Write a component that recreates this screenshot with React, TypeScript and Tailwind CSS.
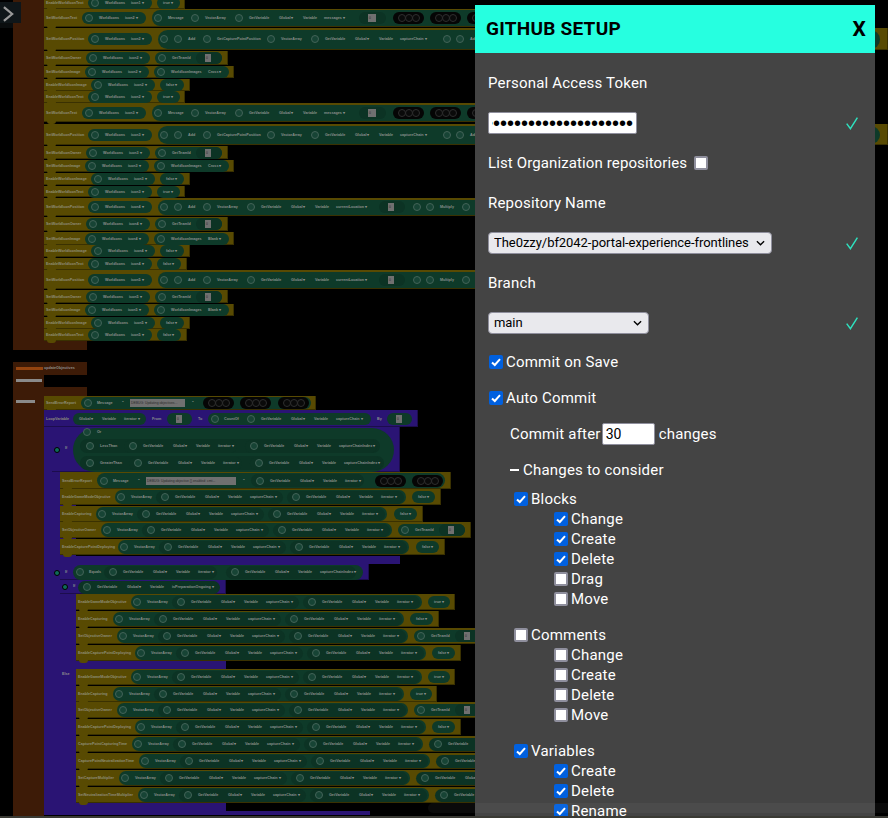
import { useState } from 'react'

type Part =
  | { k: 'pill'; x: number; w: number; dy?: number; h?: number; dark?: boolean; black?: boolean }
  | { k: 'text'; x: number; t: string; dy?: number }
  | { k: 'dot'; x: number; dy?: number; dim?: boolean }
  | { k: 'field'; x: number; w: number; t?: string; dy?: number }

type Row = { y: number; h: number; x: number; r: number; label?: string; color?: string; parts: Part[]; notch?: boolean }

const YELLOW = '#584a02'
const PURPLE = '#2a1474'
const BROWN = '#3d1b07'

const pill = (x: number, w: number, extra: Partial<Part> = {}) => ({ k: 'pill', x, w, ...extra }) as Part
const text = (x: number, t: string, dy = 0): Part => ({ k: 'text', x, t, dy })
const dot = (x: number, dy = 0): Part => ({ k: 'dot', x, dy })
const field = (x: number, w: number, t?: string, dy = 0): Part => ({ k: 'field', x, w, t, dy })

const iconPill = (x: number, n: string, name = 'WorldIcons') => [
  pill(x, 64),
  dot(x + 3),
  text(x + 17, name),
  text(x + 43, `icon${n} ▾`),
]

const boolPill = (x: number, w: number, t: string) => [pill(x, w), text(x + 6, `${t} ▾`)]

const getVar = (x: number, name: string, w: number, dark = true, dy = 0): Part[] => [
  ...(dark ? [pill(x, w, { dark: true, dy, h: 13 })] : []),
  dot(x + 5, dy),
  text(x + 19, 'GetVariable', dy),
  text(x + 49, 'Global ▾', dy),
  text(x + 72, 'Variable', dy),
  text(x + 94, `${name} ▾`, dy),
]

const teamPill = (x: number) => [
  pill(x, 67),
  dot(x + 3),
  text(x + 17, 'GetTeamId'),
  pill(x + 41, 26, { dark: true }),
  field(x + 50, 6),
]

const blackPills = (xs: number[]) =>
  xs.flatMap((x): Part[] => [
    pill(x, 31, { black: true }),
    { k: 'dot', x: x + 5, dim: true },
    { k: 'dot', x: x + 12, dim: true },
    { k: 'dot', x: x + 19, dim: true },
  ])

const messageRow = (y: number, h: number, n: string): Row => ({
  y,
  h,
  x: 44,
  r: 868,
  label: 'SetWorldIconText',
  parts: [
    ...iconPill(82, n),
    pill(152, 710, { h: 16 }),
    dot(154),
    text(168, 'Message'),
    dot(191),
    text(205, 'VectorArray'),
    dot(235),
    text(249, 'GetVariable'),
    text(279, 'Global ▾'),
    text(303, 'Variable'),
    text(324, 'messages ▾'),
    pill(359, 27, { dark: true }),
    field(368, 8),
    ...blackPills([393, 430, 467]),
  ],
})

const positionRow = (y: number, h: number, n: string, kind: 'capture' | 'location'): Row => ({
  y,
  h,
  x: 44,
  r: kind === 'capture' ? 888 : 868,
  label: 'SetWorldIconPosition',
  parts: [
    ...iconPill(88, n),
    pill(158, kind === 'capture' ? 722 : 704, { h: h - 3 }),
    dot(160),
    dot(174),
    text(188, 'Add'),
    ...(kind === 'capture'
      ? [
          dot(203),
          text(217, 'GetCapturePointPosition'),
          dot(267),
          text(281, 'VectorArray'),
          dot(311),
          text(325, 'GetVariable'),
          text(355, 'Global ▾'),
          text(379, 'Variable'),
          text(400, 'captureChain ▾'),
          dot(443),
          dot(456),
          text(470, 'Add'),
        ]
      : [
          dot(203),
          text(217, 'VectorArray'),
          dot(247),
          text(261, 'GetVariable'),
          text(291, 'Global ▾'),
          text(315, 'Variable'),
          text(336, 'currentLocation ▾'),
          pill(379, 26, { dark: true }),
          field(388, 6),
          dot(413),
          dot(426),
          text(440, 'Multiply'),
          dot(462),
        ]),
  ],
})

const ownerRow = (y: number, h: number, n: string): Row => ({
  y,
  h,
  x: 44,
  r: 228,
  label: 'SetWorldIconOwner',
  parts: [...iconPill(86, n), ...teamPill(155)],
})

const imageRow = (y: number, h: number, n: string, img: string): Row => ({
  y,
  h,
  x: 44,
  r: 234,
  label: 'SetWorldIconImage',
  parts: [...iconPill(85, n), pill(154, 75), dot(157), text(171, 'WorldIconImages'), text(208, `${img} ▾`)],
})

const enableImage = (y: number, h: number, n: string): Row => ({
  y,
  h,
  x: 44,
  r: 190,
  label: 'EnableWorldIconImage',
  parts: [...iconPill(91, n), ...boolPill(160, 24, 'false')],
})

const enableText = (y: number, h: number, n: string, v: string): Row => ({
  y,
  h,
  x: 44,
  r: v === 'true' ? 185 : 187,
  label: 'EnableWorldIconText',
  parts: [...iconPill(88, n), ...boolPill(157, v === 'true' ? 23 : 24, v)],
})

const arrayRow = (y: number, x: number, r: number, label: string, s: number, end: Part[]): Row => ({
  y,
  h: 16,
  x,
  r,
  label,
  parts: [
    pill(s, 291, { h: 14 }),
    dot(s + 2),
    text(s + 16, 'VectorArray'),
    ...getVar(s + 41, 'captureChain', 127),
    ...getVar(s + 172, 'iterator', 117),
    ...end,
  ],
})

const rows: Row[] = [
  { ...enableText(-3, 12, '1', 'true') },
  messageRow(9, 18, '2'),
  positionRow(28, 22, '2', 'capture'),
  ownerRow(51, 14, '2'),
  imageRow(66, 12, '2', 'Cross'),
  enableImage(79, 12, '2'),
  enableText(91, 12, '2', 'true'),
  messageRow(103, 19, '3'),
  positionRow(124, 21, '3', 'capture'),
  ownerRow(146, 13, '3'),
  imageRow(160, 12, '3', 'Cross'),
  enableImage(173, 12, '3'),
  enableText(186, 11, '3', 'true'),
  positionRow(198, 18, '4', 'location'),
  ownerRow(217, 14, '4'),
  imageRow(232, 13, '4', 'Blank'),
  enableImage(245, 12, '4'),
  enableText(258, 12, '4', 'false'),
  positionRow(270, 19, '5', 'location'),
  ownerRow(290, 13, '5'),
  imageRow(304, 12, '5', 'Blank'),
  enableImage(317, 12, '5'),
  enableText(329, 12, '5', 'false'),
  {
    y: 396,
    h: 14,
    x: 44,
    r: 316,
    label: 'SendErrorReport',
    parts: [
      pill(81, 230),
      dot(84),
      text(97, 'Message'),
      text(122, '"'),
      field(130, 55, 'DEBUG: Updating objectives...'),
      text(192, '"'),
      ...blackPills([203, 240, 278]),
    ],
  },
  {
    y: 410,
    h: 17,
    x: 44,
    r: 418,
    label: 'LoopVariable',
    color: PURPLE,
    notch: false,
    parts: [
      pill(73, 73),
      text(79, 'Global ▾'),
      text(102, 'Variable'),
      text(124, 'iterator ▾'),
      text(152, 'From'),
      pill(167, 25),
      field(176, 6),
      text(198, 'To'),
      pill(208, 163),
      dot(211),
      text(224, 'CountOf'),
      ...getVar(242, 'captureChain', 120, false),
      text(377, 'By'),
      pill(387, 25),
      field(396, 6),
    ],
  },
  {
    y: 427,
    h: 45,
    x: 52,
    r: 400,
    color: PURPLE,
    notch: false,
    parts: [
      pill(73, 321, { h: 44 }),
      dot(83, -17.5),
      text(97, 'Or', -18),
      pill(80, 300, { dark: true, dy: -3.5, h: 14 }),
      dot(86, -3.5),
      text(100, 'LessThan', -3.5),
      ...getVar(124, 'iterator', 113, true, -3.5),
      ...getVar(245, 'captureChainIndex', 132, true, -3.5),
      pill(80, 304, { dark: true, dy: 13.5, h: 14 }),
      dot(86, 13.5),
      text(100, 'GreaterThan', 13.5),
      ...getVar(129, 'iterator', 113, true, 13.5),
      ...getVar(250, 'captureChainIndex', 132, true, 13.5),
    ],
  },
  {
    y: 472,
    h: 17,
    x: 60,
    r: 451,
    label: 'SendErrorReport',
    parts: [
      pill(97, 348, { h: 15 }),
      dot(100),
      text(113, 'Message'),
      text(138, '"'),
      field(146, 90, 'DEBUG: Updating objective {} enabled: cmt...'),
      text(243, '"'),
      ...getVar(251, 'iterator', 113),
      ...blackPills([375, 412]),
    ],
  },
  arrayRow(489, 60, 441, 'EnableGameModeObjective', 115, boolPill(412, 23, 'false')),
  arrayRow(506, 60, 423, 'EnableCapturing', 96, boolPill(394, 23, 'false')),
  arrayRow(522, 60, 471, 'SetObjectiveOwner', 101, teamPill(398)),
  arrayRow(539, 60, 445, 'EnableCapturePointDeploying', 118, boolPill(416, 23, 'false')),
  {
    y: 564,
    h: 16,
    x: 60,
    r: 369,
    color: PURPLE,
    notch: false,
    parts: [
      pill(73, 290, { h: 15 }),
      dot(76),
      text(89, 'Equals'),
      ...getVar(104, 'iterator', 113),
      ...getVar(226, 'captureChainIndex', 130),
    ],
  },
  {
    y: 580,
    h: 14,
    x: 60,
    r: 226,
    color: PURPLE,
    notch: false,
    parts: [...getVar(78, 'isPreparationOngoing', 142)],
  },
  arrayRow(594, 76, 455, 'EnableGameModeObjective', 131, boolPill(428, 22, 'true')),
  arrayRow(611, 76, 439, 'EnableCapturing', 113, boolPill(410, 23, 'false')),
  arrayRow(628, 76, 480, 'SetObjectiveOwner', 117, teamPill(414)),
  arrayRow(645, 76, 461, 'EnableCapturePointDeploying', 135, boolPill(432, 23, 'false')),
  arrayRow(669, 76, 455, 'EnableGameModeObjective', 131, boolPill(428, 22, 'true')),
  arrayRow(686, 76, 437, 'EnableCapturing', 113, boolPill(410, 22, 'true')),
  arrayRow(702, 76, 480, 'SetObjectiveOwner', 117, teamPill(414)),
  arrayRow(719, 76, 461, 'EnableCapturePointDeploying', 135, boolPill(432, 23, 'false')),
  arrayRow(736, 76, 480, 'CapturePointCapturingTime', 132, getVar(429, 'iterator', 100)),
  arrayRow(753, 76, 480, 'CapturePointNeutralizationTime', 139, getVar(436, 'iterator', 100)),
  arrayRow(770, 76, 480, 'SetCaptureMultiplier', 119, getVar(416, 'iterator', 100)),
  arrayRow(787, 76, 480, 'SetNeutralizationTimeMultiplier', 138, getVar(435, 'iterator', 100)),
]

const rects: [number, number, number, number, string][] = [
  [13, -2, 31, 352, BROWN],
  [44, 341, 43, 9, BROWN],
  [13, 362, 74, 13, BROWN],
  [13, 375, 31, 441, BROWN],
  [44, 387, 43, 9, BROWN],
  [44, 410, 32, 405, PURPLE],
  [60, 556, 340, 8, PURPLE],
  [76, 660, 150, 9, PURPLE],
  [76, 802, 150, 9, PURPLE],
  [44, 811, 326, 4, PURPLE],
]

// markers and captions that sit on the canvas outside of a block row
const captions: [number, number, string][] = [
  [44, 368, 'updateObjectives'],
  [65, 448, 'If'],
  [65, 572, 'If'],
  [73, 586, 'If'],
  [62, 674, 'Else'],
]
const markers: [number, number][] = [
  [54, 447],
  [54, 570],
  [62, 584],
]
const bars: [number, number, number, string][] = [
  [16, 367, 27, '#94440f'],
  [16, 379, 26, '#8a8a8a'],
  [16, 400, 19, '#8a8a8a'],
]

const tinyText = 'absolute text-[3.7px] leading-[6px] font-bold whitespace-nowrap'

function CanvasPart({ part, mid }: { part: Part; mid: number }) {
  const top = mid + (part.dy ?? 0)
  if (part.k === 'pill') {
    const h = part.h ?? 12
    return (
      <div
        className={`absolute rounded-full ${part.black ? 'bg-[#050505]' : part.dark ? 'bg-[#0c3324]' : 'bg-[#0e3a29]'}`}
        style={{ left: part.x, top: top - h / 2, width: part.w, height: h }}
      />
    )
  }
  if (part.k === 'dot') {
    return (
      <div
        className={`absolute w-[8px] h-[8px] rounded-full border ${part.dim ? 'border-[#2e2e2e] bg-[#0a0a0a]' : 'border-[#436358] bg-[#174435]'}`}
        style={{ left: part.x, top: top - 4 }}
      />
    )
  }
  if (part.k === 'field') {
    return (
      <div
        className="absolute h-[8px] bg-[#707070] overflow-hidden text-[3.4px] leading-[8px] pl-[1px] whitespace-nowrap text-[#2c2c2c]"
        style={{ left: part.x, top: top - 4, width: part.w }}
      >
        {part.t ?? '0'}
      </div>
    )
  }
  return (
    <div className={`${tinyText} text-[#8b8f8c]`} style={{ left: part.x, top: top - 3 }}>
      {part.t}
    </div>
  )
}

function BlockCanvas() {
  return (
    <div className="absolute inset-0 overflow-hidden bg-black font-['Liberation_Sans',sans-serif]">
      {rects.map(([x, y, w, h, c], i) => (
        <div key={i} className="absolute" style={{ left: x, top: y, width: w, height: h, background: c }} />
      ))}

      {rows.map((row, i) => {
        const mid = row.y + row.h / 2
        const color = row.color ?? YELLOW
        return (
          <div key={i}>
            <div
              className="absolute border-b border-r border-[#00000055]"
              style={{ left: row.x, top: row.y, width: row.r - row.x, height: row.h, background: color }}
            />
            {row.notch !== false && (
              <div
                className="absolute w-[9px] h-[3px] rounded-b-[4px]"
                style={{ left: row.x + 3, top: row.y + row.h - 1, background: color }}
              />
            )}
            {row.label && (
              <div className={`${tinyText} text-[#8f8e7a]`} style={{ left: row.x + 2, top: mid - 3 }}>
                {row.label}
              </div>
            )}
            {/* whatever starts under the panel never shows */}
            {row.parts
              .filter((part) => part.x < 475)
              .map((part, j) => (
                <CanvasPart key={j} part={part} mid={mid} />
              ))}
          </div>
        )
      })}

      {bars.map(([x, y, w, c]) => (
        <div key={y} className="absolute h-[3px]" style={{ left: x, top: y, width: w, background: c }} />
      ))}
      {markers.map(([x, y]) => (
        <div
          key={y}
          className="absolute w-[6px] h-[6px] rounded-full bg-[#0f6b58] border border-black"
          style={{ left: x, top: y }}
        />
      ))}
      {captions.map(([x, y, t]) => (
        <div key={y} className={`${tinyText} text-[#8f8f8f]`} style={{ left: x, top: y - 3 }}>
          {t}
        </div>
      ))}
    </div>
  )
}

function Tick() {
  return (
    <svg width="12" height="13" viewBox="0 0 12 13" fill="none" className="shrink-0">
      <path d="M0.7 6.6 L4.4 11.6 L11.4 0.6" stroke="#2fe0be" strokeWidth="1.5" />
    </svg>
  )
}

function Checkbox({ defaultChecked = false }: { defaultChecked?: boolean }) {
  const [checked, setChecked] = useState(defaultChecked)
  return (
    <span className="relative inline-flex w-[14px] h-[14px] shrink-0">
      <input
        type="checkbox"
        checked={checked}
        onChange={(e) => setChecked(e.target.checked)}
        className="appearance-none m-0 w-[14px] h-[14px] rounded-[2px] border-2 border-[#8f8f9d] bg-white checked:bg-[#0060df] checked:border-[#0060df]"
      />
      {checked && (
        <svg viewBox="0 0 14 14" className="absolute inset-0 w-[14px] h-[14px] pointer-events-none" fill="none">
          <path d="M3 7.4 L5.8 10 L11 4.2" stroke="white" strokeWidth="2" />
        </svg>
      )}
    </span>
  )
}

function Option({ label, checked, className = '' }: { label: string; checked?: boolean; className?: string }) {
  return (
    <label className={`flex items-center h-[20px] gap-[3px] ${className}`}>
      <Checkbox defaultChecked={checked} />
      <span>{label}</span>
    </label>
  )
}

function Select({ value, options, width }: { value: string; options: string[]; width: string }) {
  return (
    <span className={`relative inline-flex h-[22px] ${width}`}>
      <select
        defaultValue={value}
        className="appearance-none w-full h-full pl-[5px] pr-[20px] rounded-[4px] border border-[#8f8f9d] bg-[#e9e9ed] text-black text-[13px] tracking-[-0.05px] leading-[20px] outline-none"
      >
        {options.map((o) => (
          <option key={o}>{o}</option>
        ))}
      </select>
      <svg viewBox="0 0 10 6" fill="none" className="absolute right-[7px] top-[8px] w-[9px] h-[6px] pointer-events-none">
        <path d="M1 1 L5 5 L9 1" stroke="black" strokeWidth="1.5" />
      </svg>
    </span>
  )
}

function Group({ title, checked, items, className = '' }: { title: string; checked: boolean; items: [string, boolean][]; className?: string }) {
  return (
    <div className={`pl-[26px] ${className}`}>
      <Option label={title} checked={checked} />
      <div className="pl-[40px]">
        {items.map(([label, on]) => (
          <Option key={label} label={label} checked={on} />
        ))}
      </div>
    </div>
  )
}

function SetupPanel() {
  return (
    <div className="absolute left-[475px] top-[5px] w-[400px] h-[811px] overflow-hidden bg-[#444444] text-white text-[15px] tracking-[0.2px] leading-[20px] font-['Roboto',sans-serif]">
      <div className="h-[48px] bg-[#26ffe0] text-black flex items-center justify-between pl-[11px] pr-[9px] text-[19px] tracking-[0.25px] font-bold">
        <span>GITHUB SETUP</span>
        <button className="text-[21px] font-bold">X</button>
      </div>

      <div className="pl-[13px] pr-[17px]">
        <div className="mt-[20px] h-[20px]">Personal Access Token</div>
        <div className="mt-[19px] flex items-center justify-between h-[22px]">
          <input
            type="password"
            dir="rtl"
            defaultValue="ghp_0000000000000000000000000000000000000"
            className="w-[149px] h-[22px] px-[3px] bg-white border border-[#8f8f9d] rounded-[2px] text-black text-[20px] tracking-normal font-['Liberation_Sans',sans-serif] outline-none"
          />
          <Tick />
        </div>
        <div className="mt-[19px] flex items-center gap-[7px] h-[20px]">
          <span className="tracking-[0.12px]">List Organization repositories</span>
          <Checkbox />
        </div>
        <div className="mt-[20px] h-[20px]">Repository Name</div>
        <div className="mt-[19px] flex items-center justify-between h-[22px]">
          <Select value="The0zzy/bf2042-portal-experience-frontlines" options={['The0zzy/bf2042-portal-experience-frontlines']} width="w-[284px]" />
          <Tick />
        </div>
        <div className="mt-[19px] h-[20px]">Branch</div>
        <div className="mt-[19px] flex items-center justify-between h-[22px]">
          <Select value="main" options={['main']} width="w-[161px]" />
          <Tick />
        </div>

        <Option label="Commit on Save" checked className="mt-[18px] pl-[1px]" />
        <Option label="Auto Commit" checked className="mt-[16px] pl-[1px]" />

        <div className="mt-[15px] pl-[22px] flex items-center h-[22px]">
          <span>Commit after</span>
          <input
            type="text"
            defaultValue="30"
            className="ml-[1px] w-[53px] h-[22px] px-[3px] bg-white border border-[#8f8f9d] rounded-[2px] text-black text-[14px] tracking-normal outline-none"
          />
          <span className="ml-[4px]">changes</span>
        </div>
        <div className="mt-[15px] pl-[22px] h-[20px] flex items-center gap-[4px]">
          <span className="w-[9px] h-[2px] bg-white" />
          <span>Changes to consider</span>
        </div>

        <Group
          title="Blocks"
          checked
          className="mt-[9px]"
          items={[['Change', true], ['Create', true], ['Delete', true], ['Drag', false], ['Move', false]]}
        />
        <Group
          title="Comments"
          checked={false}
          className="mt-[16px]"
          items={[['Change', false], ['Create', false], ['Delete', false], ['Move', false]]}
        />
        <Group
          title="Variables"
          checked
          className="mt-[16px]"
          items={[['Create', true], ['Delete', true], ['Rename', true]]}
        />
      </div>
    </div>
  )
}

function SidebarToggle() {
  return (
    <div className="absolute left-0 top-0 w-[21px] h-[28px]">
      <button className="absolute left-0 top-[2px] w-[21px] h-[21px] bg-[#0f1619]">
        <svg viewBox="0 0 12 17" fill="none" className="absolute left-[3px] top-[4px] w-[11px] h-[16px]">
          <path d="M1 1 L10 8.5 L1 16" stroke="#999999" strokeWidth="2.4" />
        </svg>
      </button>
      <div className="absolute left-0 top-[23px] w-[13px] h-[5px] bg-[#0a0d0e]" />
    </div>
  )
}

export default function App() {
  return (
    <div className="relative w-[888px] h-[818px] overflow-hidden bg-black">
      <BlockCanvas />
      <SidebarToggle />
      <SetupPanel />
      {/* horizontal scrollbar track */}
      <div className="absolute left-[428px] top-[803px] w-[460px] h-[10px] rounded-l-full bg-white/[0.04]" />
      <div className="absolute left-0 top-[816px] w-full h-[2px] bg-[#3a3a34]" />
    </div>
  )
}
